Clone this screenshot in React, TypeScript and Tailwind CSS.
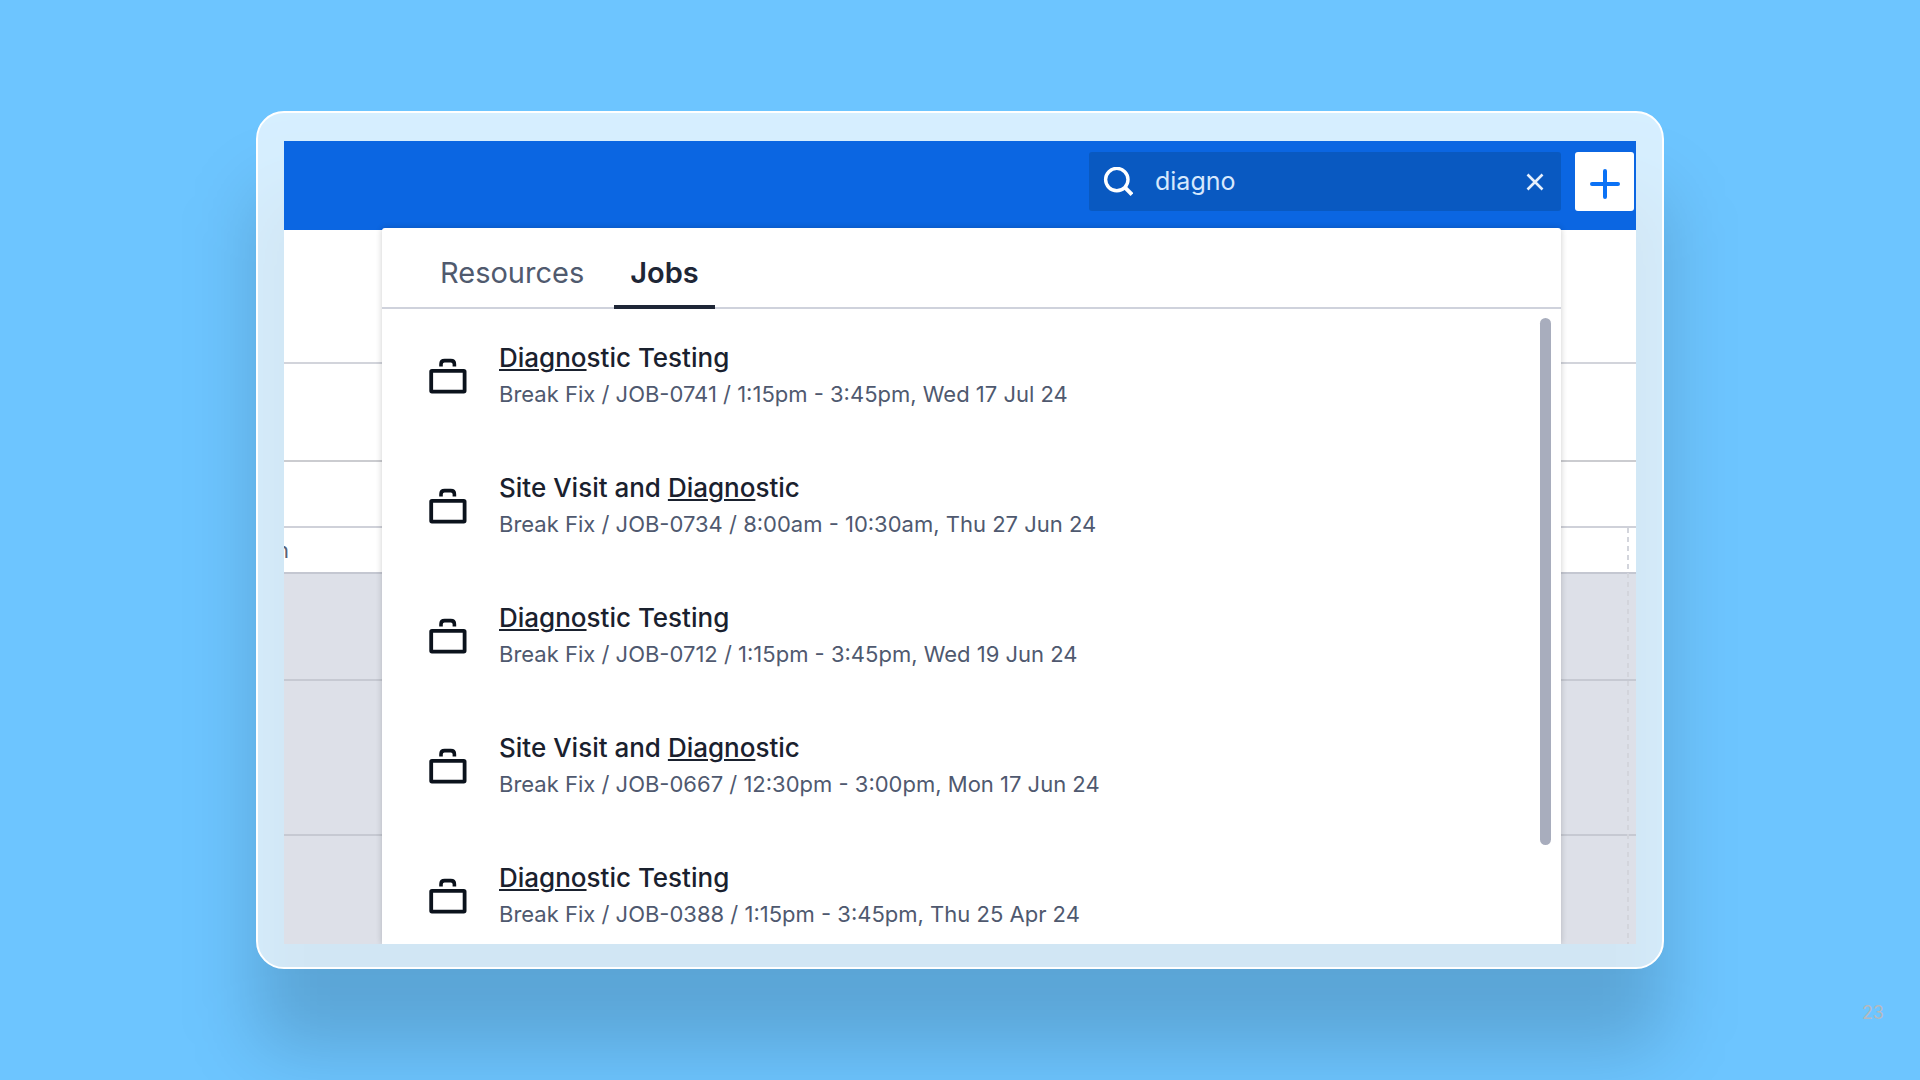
import { useState } from "react";

const QUERY = "Diagno";

const jobs = [
  { title: "Diagnostic Testing", detail: "Break Fix / JOB-0741 / 1:15pm - 3:45pm, Wed 17 Jul 24" },
  { title: "Site Visit and Diagnostic", detail: "Break Fix / JOB-0734 / 8:00am - 10:30am, Thu 27 Jun 24" },
  { title: "Diagnostic Testing", detail: "Break Fix / JOB-0712 / 1:15pm - 3:45pm, Wed 19 Jun 24" },
  { title: "Site Visit and Diagnostic", detail: "Break Fix / JOB-0667 / 12:30pm - 3:00pm, Mon 17 Jun 24" },
  { title: "Diagnostic Testing", detail: "Break Fix / JOB-0388 / 1:15pm - 3:45pm, Thu 25 Apr 24" },
];

function SearchIcon() {
  return (
    <svg viewBox="0 0 30 30" className="size-[30px] shrink-0" fill="none" stroke="#fff" strokeWidth="3.4" aria-hidden="true">
      <circle cx="13.8" cy="12.6" r="11.2" />
      <path d="M21.6 20.2 29 27.6" strokeWidth="4" />
    </svg>
  );
}

function BriefcaseIcon() {
  return (
    <svg viewBox="0 0 38 36" className="h-9 w-[38px] shrink-0" fill="none" stroke="#0b121c" aria-hidden="true">
      <path d="M12 8.4V6.2q0-3.6 3.6-3.6h6.2q3.6 0 3.6 3.6v2.2" strokeWidth="3.6" />
      <rect x="2.2" y="12.8" width="33.4" height="20.8" rx="0.8" strokeWidth="3.8" />
    </svg>
  );
}

function Highlighted({ text }: { text: string }) {
  const [before, after] = text.split(QUERY);
  return (
    <>
      {before}
      <span className="underline decoration-2 underline-offset-2">{QUERY}</span>
      {after}
    </>
  );
}

function Schedule() {
  return (
    <div className="flex flex-1 flex-col bg-white">
      <div className="h-[134px] border-b-2 border-[#d2d4db]" />
      <div className="h-[98px] border-b-2 border-[#cbccd0]" />
      <div className="h-[66px] border-b-2 border-[#cfd1d9]" />
      <div className="relative flex flex-1 flex-col">
        <div className="flex h-[46px] items-center overflow-hidden border-b-2 border-[#c4c7d1] text-[22px] text-[#5a6175]">
          <span className="-ml-2">n</span>
        </div>
        <div className="h-[107px] border-b-2 border-[#c6c9d2] bg-[#dde0e8]" />
        <div className="h-[155px] border-b-2 border-[#c6c9d2] bg-[#dde0e8]" />
        <div className="min-h-[108px] flex-1 bg-[#dde0e8]" />
        <div className="absolute inset-y-0 right-[7px] w-0.5 bg-[repeating-linear-gradient(to_bottom,#d3d5dc_0,#d3d5dc_5px,transparent_5px,transparent_9px)]" />
      </div>
    </div>
  );
}

function ResultsMenu() {
  const [tab, setTab] = useState("Jobs");
  return (
    <section className="absolute top-[87px] right-[75px] bottom-0 left-[98px] overflow-hidden rounded-t-[3px] bg-white">
      <div role="tablist" className="flex h-[81px] gap-[14px] border-b-2 border-[#cfd2dc] pl-[42px]">
        {["Resources", "Jobs"].map((name) => (
          <button
            key={name}
            type="button"
            role="tab"
            aria-selected={tab === name}
            onClick={() => setTab(name)}
            className={
              tab === name
                ? "-mb-0.5 border-b-4 border-[#1e2636] px-4 pt-3 text-[29px] font-semibold text-[#1e2636]"
                : "-mb-0.5 border-b-4 border-transparent px-4 pt-3 text-[29px] text-[#505a6e]"
            }
          >
            {name}
          </button>
        ))}
      </div>
      <ul>
        {jobs.map((job) => (
          <li key={job.detail} className="flex h-[130px] items-start pt-[31px]">
            <a href="#job" className="flex items-center gap-8 pl-[47px]">
              <BriefcaseIcon />
              <span className="flex flex-col">
                <span className="text-[26px] leading-9 font-medium text-[#1a212e]">
                  <Highlighted text={job.title} />
                </span>
                <span className="text-[22px] leading-9 text-[#4f596f]">{job.detail}</span>
              </span>
            </a>
          </li>
        ))}
      </ul>
      <div className="absolute top-[90px] right-[10px] h-[527px] w-[11px] rounded-full bg-[#a8adbd]" />
    </section>
  );
}

export default function App() {
  const [query, setQuery] = useState("diagno");
  return (
    <main className="flex min-h-screen flex-col overflow-hidden bg-[#6dc5ff] px-[256px] pt-[111px] font-['Inter',sans-serif]">
      <div className="relative">
        <div className="absolute inset-0 translate-y-[80px] rounded-[28px] bg-black/16 blur-[36px]" />
        <div className="relative rounded-[28px] border-2 border-white bg-white/72 px-[26px] pt-7 pb-[23px]">
          <div className="relative flex flex-col overflow-hidden">
            <header className="flex h-[89px] items-start justify-end gap-[14px] bg-[#0b66e2] pt-[11px] pr-[2px]">
              <label className="flex h-[59px] w-[472px] items-center rounded-[3px] bg-[#0959c1] pr-[15px] pl-[14px]">
                <SearchIcon />
                <input
                  aria-label="Search"
                  value={query}
                  onChange={(e) => setQuery(e.target.value)}
                  className="ml-[22px] min-w-0 flex-1 bg-transparent text-[25px] text-[#d6e8fd] outline-none"
                />
                <button type="button" aria-label="Clear search" onClick={() => setQuery("")} className="p-0.5">
                  <svg viewBox="0 0 18 18" className="size-[18px]" stroke="#e6f0fd" strokeWidth="2.6" aria-hidden="true">
                    <path d="M1.5 1.5 16.5 16.5M16.5 1.5 1.5 16.5" />
                  </svg>
                </button>
              </label>
              <button type="button" aria-label="Add" className="flex h-[59px] w-[59px] items-center justify-center rounded-[3px] bg-white pt-1">
                <svg viewBox="0 0 30 30" className="size-[30px]" stroke="#0b72f5" strokeWidth="4" strokeLinecap="round" aria-hidden="true">
                  <path d="M15 2V28M2 15H28" />
                </svg>
              </button>
            </header>
            <Schedule />
            <div className="absolute top-[87px] right-[75px] bottom-0 left-[98px] rounded-t-[3px] shadow-[0_0_6px_rgba(0,0,0,0.2)]" />
            <ResultsMenu />
          </div>
        </div>
      </div>
      <footer className="relative -mr-[220px] mt-[30px] text-right text-lg text-[#b6b9be]">23</footer>
    </main>
  );
}
